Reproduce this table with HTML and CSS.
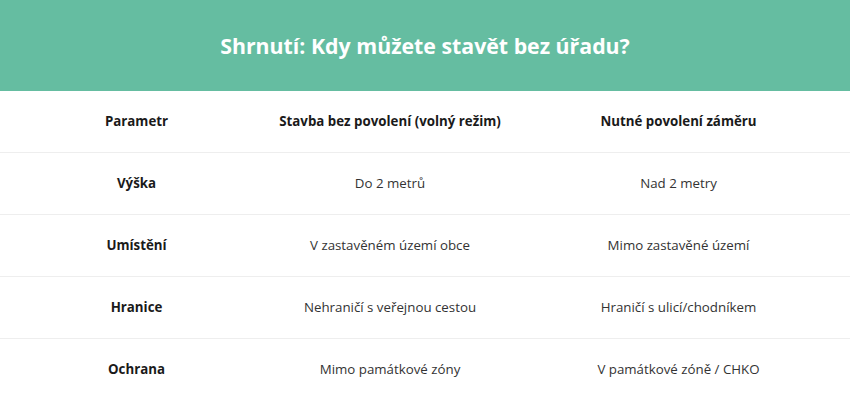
FILE: index.html
```html
<!DOCTYPE html>
<html lang="cs">
<head>
<meta charset="utf-8">
<link rel="stylesheet" href="styles.css">
</head>
<body>
<div class="card">
  <div class="title">Shrnutí: Kdy můžete stavět bez úřadu?</div>
  <table class="tbl">
    <colgroup><col class="c1"><col class="c2"><col class="c3"></colgroup>
    <thead>
      <tr><th>Parametr</th><th>Stavba bez povolení (volný režim)</th><th>Nutné povolení záměru</th></tr>
    </thead>
    <tbody>
      <tr><td class="key">Výška</td><td>Do 2 metrů</td><td>Nad 2 metry</td></tr>
      <tr><td class="key">Umístění</td><td>V zastavěném území obce</td><td>Mimo zastavěné území</td></tr>
      <tr><td class="key">Hranice</td><td>Nehraničí s veřejnou cestou</td><td>Hraničí s ulicí/chodníkem</td></tr>
      <tr><td class="key">Ochrana</td><td>Mimo památkové zóny</td><td>V památkové zóně / CHKO</td></tr>
    </tbody>
  </table>
</div>
</body>
</html>
```
FILE: styles.css
```css
html, body { margin: 0; padding: 0; background: #fff; }
body { font-family: "Open Sans", "Noto Sans", sans-serif; width: 850px; }
.title {
  background: #65bda1;
  color: #fff;
  font-weight: 700;
  font-size: 21.3px;
  height: 91px;
  display: flex;
  align-items: center;
  justify-content: center;
  padding-bottom: 1px;
  box-sizing: border-box;
}
.tbl { width: 850px; border-collapse: collapse; table-layout: fixed; }
.c1 { width: 273px; }
.c2 { width: 234px; }
.c3 { width: 343px; }
.tbl th, .tbl td {
  text-align: center;
  font-size: 13.3px;
  line-height: 20px;
  padding: 20px 0 21px;
  white-space: nowrap;
  border-bottom: 1px solid #eeeeee;
  color: #333;
}
.tbl th { font-weight: 700; color: #1a1a1a; }
.tbl td.key { font-weight: 700; color: #1a1a1a; }
```
